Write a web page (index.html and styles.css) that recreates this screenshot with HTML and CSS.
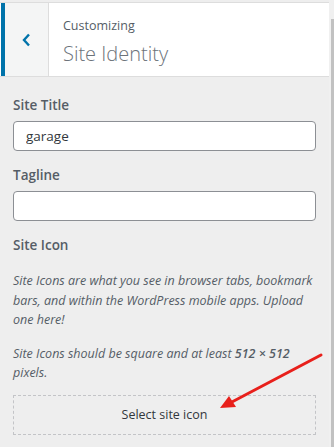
FILE: index.html
```html
<!DOCTYPE html>
<html lang="en">
<head>
    <meta charset="UTF-8">
    <meta name="viewport" content="width=device-width, initial-scale=1.0">
    <title>Customizing Site Identity</title>
    <link rel="stylesheet" href="styles.css">
</head>
<body>
    <div class="frame">
        <div class="panel">
            <div class="top-strip"></div>

            <div class="header">
                <button class="back" aria-label="Back">
                    <svg width="10" height="14" viewBox="0 0 10 14">
                        <path d="M7 1.5 L2 7 L7 12.5" fill="none" stroke="#0073aa" stroke-width="2.4"/>
                    </svg>
                </button>
                <div class="titles">
                    <div class="crumb">Customizing</div>
                    <div class="title">Site Identity</div>
                </div>
            </div>

            <div class="content">
                <div class="form-group">
                    <label for="siteTitle">Site Title</label>
                    <input type="text" id="siteTitle" value="garage">
                </div>

                <div class="form-group">
                    <label for="tagline">Tagline</label>
                    <input type="text" id="tagline">
                </div>

                <div class="form-group">
                    <div class="label">Site Icon</div>
                    <p class="desc">Site Icons are what you see in browser tabs, bookmark bars, and within the WordPress mobile apps. Upload one here!</p>
                    <p class="desc">Site Icons should be square and at least <strong>512 &times; 512</strong> pixels.</p>
                    <button class="select-icon">Select site icon</button>
                </div>
            </div>
        </div>

        <div class="scrollbar">
            <div class="thumb"></div>
        </div>
    </div>

    <!-- annotation arrow drawn over the panel -->
    <svg class="arrow" width="334" height="447" viewBox="0 0 334 447">
        <line x1="321" y1="355" x2="230" y2="403" stroke="#e8201b" stroke-width="3" stroke-linecap="round"/>
        <polygon points="220,408 229,396 236,407" fill="#e8201b"/>
    </svg>
</body>
</html>
```

FILE: styles.css
```css
html, body {
    margin: 0;
    padding: 0;
}
body {
    font-family: 'Open Sans', 'Noto Sans', sans-serif;
    background-color: #eeeeee;
    color: #555d66;
    width: 334px;
    height: 447px;
    overflow: hidden;
    position: relative;
}
.frame {
    display: flex;
    height: 447px;
}
.panel {
    flex: 1;
}
.top-strip {
    height: 2px;
    border-bottom: 1px solid #dddddd;
    background-color: #eeeeee;
}
.header {
    display: flex;
    height: 73px;
    background-color: #ffffff;
    border-bottom: 1px solid #dddddd;
}
.back {
    width: 48px;
    margin: 0 0 0 1px;
    padding: 0;
    border: none;
    border-left: 4px solid #0073aa;
    border-right: 1px solid #dddddd;
    background-color: #f4f5f5;
    display: flex;
    align-items: center;
    justify-content: center;
    cursor: pointer;
}
.titles {
    padding: 14px 0 0 14px;
}
.crumb {
    font-size: 12.5px;
    line-height: 18px;
    color: #555d66;
}
.title {
    font-size: 20px;
    font-weight: 300;
    line-height: 28px;
    margin-top: 5px;
    color: #6c737a;
}
.content {
    padding: 18px 13px 0 13px;
}
.form-group {
    margin-bottom: 14px;
}
label, .label {
    display: block;
    font-size: 13.5px;
    font-weight: 600;
    line-height: 20px;
    margin-bottom: 6px;
    color: #555d66;
}
input {
    display: block;
    width: 100%;
    height: 30px;
    padding: 0 8px 0 12px;
    border: 1px solid #8c8f94;
    border-radius: 4px;
    box-sizing: border-box;
    font-family: inherit;
    font-size: 13.5px;
    color: #32373c;
    background-color: #ffffff;
}
.desc {
    font-size: 12.5px;
    font-style: italic;
    line-height: 19.5px;
    margin: 16px 0 0 0;
}
.desc + .desc {
    margin-top: 14px;
}
.desc strong {
    font-weight: 600;
}
.select-icon {
    display: block;
    width: 100%;
    height: 40px;
    margin-top: 12px;
    border: 1px dashed #c3c4c7;
    background-color: transparent;
    font-family: inherit;
    font-size: 12.5px;
    color: #32373c;
    cursor: pointer;
}
.scrollbar {
    width: 5px;
    background-color: #f0f0f0;
    padding-top: 19px;
    display: flex;
    justify-content: flex-end;
}
.thumb {
    width: 3px;
    height: 428px;
    background-color: #c1c1c1;
}
.arrow {
    position: absolute;
    top: 0;
    left: 0;
    pointer-events: none;
}
```
